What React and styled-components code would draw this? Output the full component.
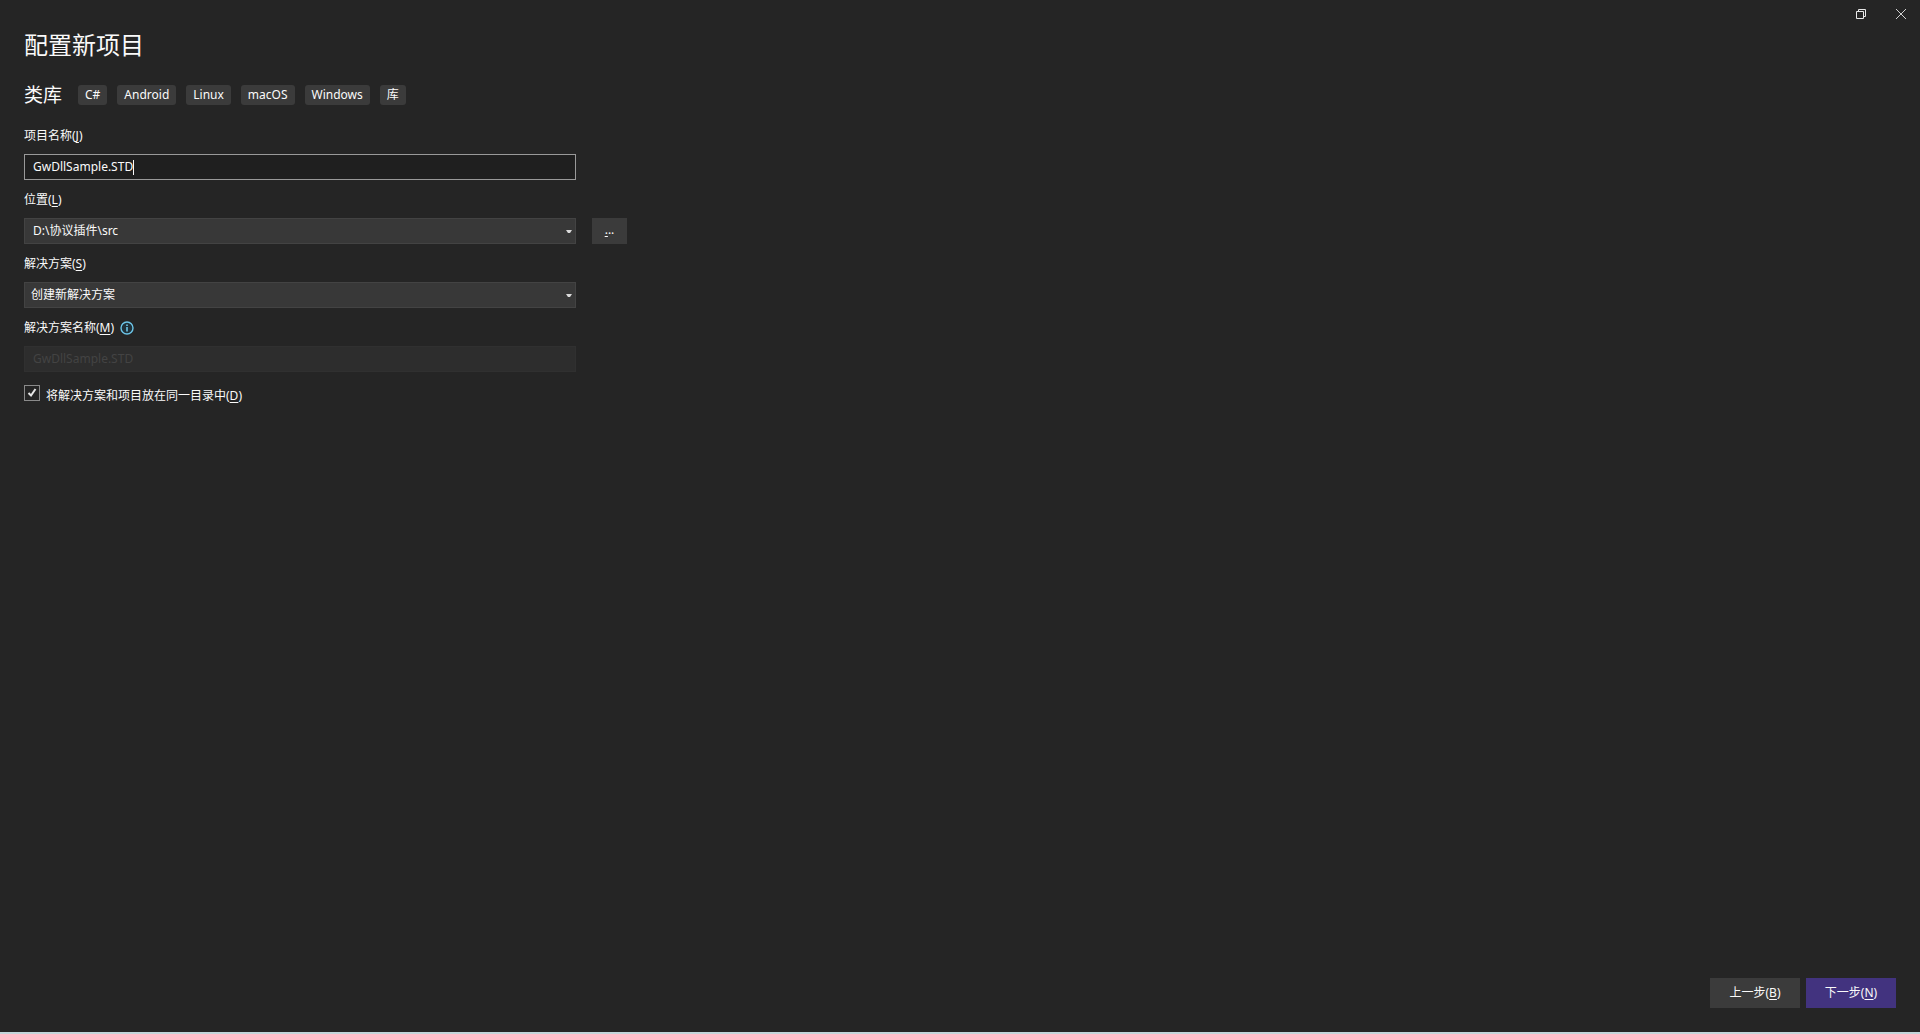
import styled, { createGlobalStyle } from "styled-components";
import { useState } from "react";

const GlobalStyle = createGlobalStyle`
    * {
        box-sizing: border-box;
    }
    body {
        margin: 0;
        background: #252525;
        color: #fafafa;
        font-family: "Noto Sans", "Noto Sans CJK SC", sans-serif;
        font-size: 12px;
        line-height: 18px;
    }
    button, input, select {
        font: inherit;
        color: inherit;
        margin: 0;
    }
`

const Window = styled.div`
    min-height: 100vh;
    display: flex;
    flex-direction: column;
    border-bottom: 2px solid #c3d6da;
`
const TitleBar = styled.header`
    display: flex;
    justify-content: flex-end;
    gap: 2px;
    height: 28px;
`
const WindowButton = styled.button`
    width: 38px;
    display: flex;
    align-items: center;
    justify-content: center;
    padding: 0;
    border: none;
    background: none;
`
const Content = styled.main`
    flex: 1;
    padding: 0 24px;
`
const Title = styled.h1`
    margin: 0;
    font-size: 24px;
    line-height: 34px;
    font-weight: 400;
`
const TypeRow = styled.div`
    display: flex;
    align-items: center;
    margin: 18px 0 17px;
`
const TypeName = styled.h2`
    margin: 0 16px 0 0;
    font-size: 19px;
    line-height: 30px;
    font-weight: 400;
`
const Tags = styled.ul`
    display: flex;
    gap: 10px;
    margin: 0;
    padding: 0;
    list-style: none;
`
const Tag = styled.li`
    padding: 0 7px;
    border-radius: 3px;
    background: #3b3b3b;
    line-height: 20px;
`
const Field = styled.div`
    margin-bottom: 11px;
`
const LabelRow = styled.div`
    display: flex;
    align-items: center;
    gap: 6px;
    margin-bottom: 9px;
`
const ControlRow = styled.div`
    display: flex;
    gap: 16px;
`
const TextBox = styled.div`
    display: flex;
    align-items: center;
    width: 552px;
    max-width: 100%;
    height: 26px;
    padding: 0 8px;
    border: 1px solid ${(props) => (props.$disabled ? "#303030" : "#999999")};
    background: ${(props) => (props.$disabled ? "#2d2d2d" : "#1f1f1f")};
`
const TextInput = styled.input`
    field-sizing: content;
    min-width: 0;
    padding: 0;
    border: none;
    outline: none;
    background: none;

    &:disabled {
        color: #434343;
    }
`
const Caret = styled.span`
    width: 1px;
    height: 15px;
    background: #fafafa;
`
const Combo = styled.div`
    position: relative;
    width: 552px;
    max-width: 100%;
`
const Select = styled.select`
    display: block;
    appearance: none;
    width: 100%;
    height: 26px;
    padding: 0 20px 0 ${(props) => (props.$inset ? "8px" : "6px")};
    border: 1px solid #434343;
    border-radius: 0;
    outline: none;
    background: #383838;
`
const Arrow = styled.svg`
    position: absolute;
    right: 4px;
    top: 12px;
    pointer-events: none;
`
const BrowseButton = styled.button`
    width: 35px;
    height: 26px;
    padding: 0 0 2px;
    border: none;
    background: #3b3b3b;
`
const CheckRow = styled.div`
    display: flex;
    gap: 6px;
    margin-top: 13px;
`
const CheckBox = styled.input`
    appearance: none;
    width: 16px;
    height: 16px;
    border: 1px solid #8a8a8a;
    background: #252525;
`
const CheckWrap = styled.span`
    position: relative;
    display: flex;
    width: 16px;
    height: 16px;
`
const CheckMark = styled.svg`
    position: absolute;
    inset: 0;
    pointer-events: none;
`
const CheckLabel = styled.label`
    padding-top: 2px;
`
const Footer = styled.footer`
    display: flex;
    justify-content: flex-end;
    gap: 6px;
    padding: 24px;
`
const Button = styled.button`
    width: 90px;
    height: 30px;
    padding: 0;
    border: none;
    background: ${(props) => (props.$primary ? "#42337f" : "#3b3b3b")};
`
const Key = styled.u`
    text-underline-offset: 2px;
    text-decoration-skip-ink: none;
`

const tags = ["C#", "Android", "Linux", "macOS", "Windows", "库"];

const DropArrow = () => (
    <Arrow width="6" height="4" viewBox="0 0 6 4" aria-hidden="true">
        <path d="M0 0H6L4 3H2Z" fill="#dadada" />
    </Arrow>
)

const InfoIcon = () => (
    <svg width="14" height="14" viewBox="0 0 14 14" fill="none" aria-hidden="true">
        <circle cx="7" cy="7" r="6" fill="#203139" stroke="#6cc5e8" strokeWidth="1.4" />
        <path d="M7 6V10.5M7 3.5V5" stroke="#6cc5e8" strokeWidth="1.6" />
    </svg>
)

const App = () => {
    const [name, setName] = useState("GwDllSample.STD");
    const [sameFolder, setSameFolder] = useState(true);

    return (
        <Window>
            <GlobalStyle />
            <TitleBar>
                <WindowButton aria-label="还原">
                    <svg width="10" height="10" viewBox="0 0 10 10" fill="none" stroke="#e8e8e8">
                        <path d="M0.5 2.5H7.5V9.5H0.5ZM2.5 2.5V0.5H9.5V7.5H7.5" />
                    </svg>
                </WindowButton>
                <WindowButton aria-label="关闭">
                    <svg width="10" height="10" viewBox="0 0 10 10" fill="none" stroke="#d0d0d0">
                        <path d="M0 0L10 10M10 0L0 10" />
                    </svg>
                </WindowButton>
            </TitleBar>

            <Content>
                <Title>配置新项目</Title>
                <TypeRow>
                    <TypeName>类库</TypeName>
                    <Tags>
                        {tags.map((tag) => <Tag key={tag}>{tag}</Tag>)}
                    </Tags>
                </TypeRow>

                <Field>
                    <LabelRow>
                        <label htmlFor="name">项目名称(<Key>J</Key>)</label>
                    </LabelRow>
                    <TextBox>
                        <TextInput id="name" value={name} onChange={(e) => setName(e.target.value)} />
                        <Caret />
                    </TextBox>
                </Field>

                <Field>
                    <LabelRow>
                        <label htmlFor="location">位置(<Key>L</Key>)</label>
                    </LabelRow>
                    <ControlRow>
                        <Combo>
                            <Select id="location" $inset>
                                <option>D:\协议插件\src</option>
                            </Select>
                            <DropArrow />
                        </Combo>
                        <BrowseButton aria-label="浏览"><Key>.</Key>..</BrowseButton>
                    </ControlRow>
                </Field>

                <Field>
                    <LabelRow>
                        <label htmlFor="solution">解决方案(<Key>S</Key>)</label>
                    </LabelRow>
                    <Combo>
                        <Select id="solution">
                            <option>创建新解决方案</option>
                        </Select>
                        <DropArrow />
                    </Combo>
                </Field>

                <Field>
                    <LabelRow>
                        <label htmlFor="solutionName">解决方案名称(<Key>M</Key>)</label>
                        <InfoIcon />
                    </LabelRow>
                    <TextBox $disabled>
                        <TextInput id="solutionName" value={name} disabled readOnly />
                    </TextBox>
                </Field>

                <CheckRow>
                    <CheckWrap>
                        <CheckBox id="sameFolder" type="checkbox" checked={sameFolder} onChange={(e) => setSameFolder(e.target.checked)} />
                        {sameFolder && (
                            <CheckMark width="16" height="16" viewBox="0 0 16 16" fill="none" aria-hidden="true">
                                <path d="M4.5 8L7 10.5L11.5 4" stroke="#e6e6e6" strokeWidth="2" />
                            </CheckMark>
                        )}
                    </CheckWrap>
                    <CheckLabel htmlFor="sameFolder">将解决方案和项目放在同一目录中(<Key>D</Key>)</CheckLabel>
                </CheckRow>
            </Content>

            <Footer>
                <Button>上一步(<Key>B</Key>)</Button>
                <Button $primary>下一步(<Key>N</Key>)</Button>
            </Footer>
        </Window>
    )
}

export default App;
